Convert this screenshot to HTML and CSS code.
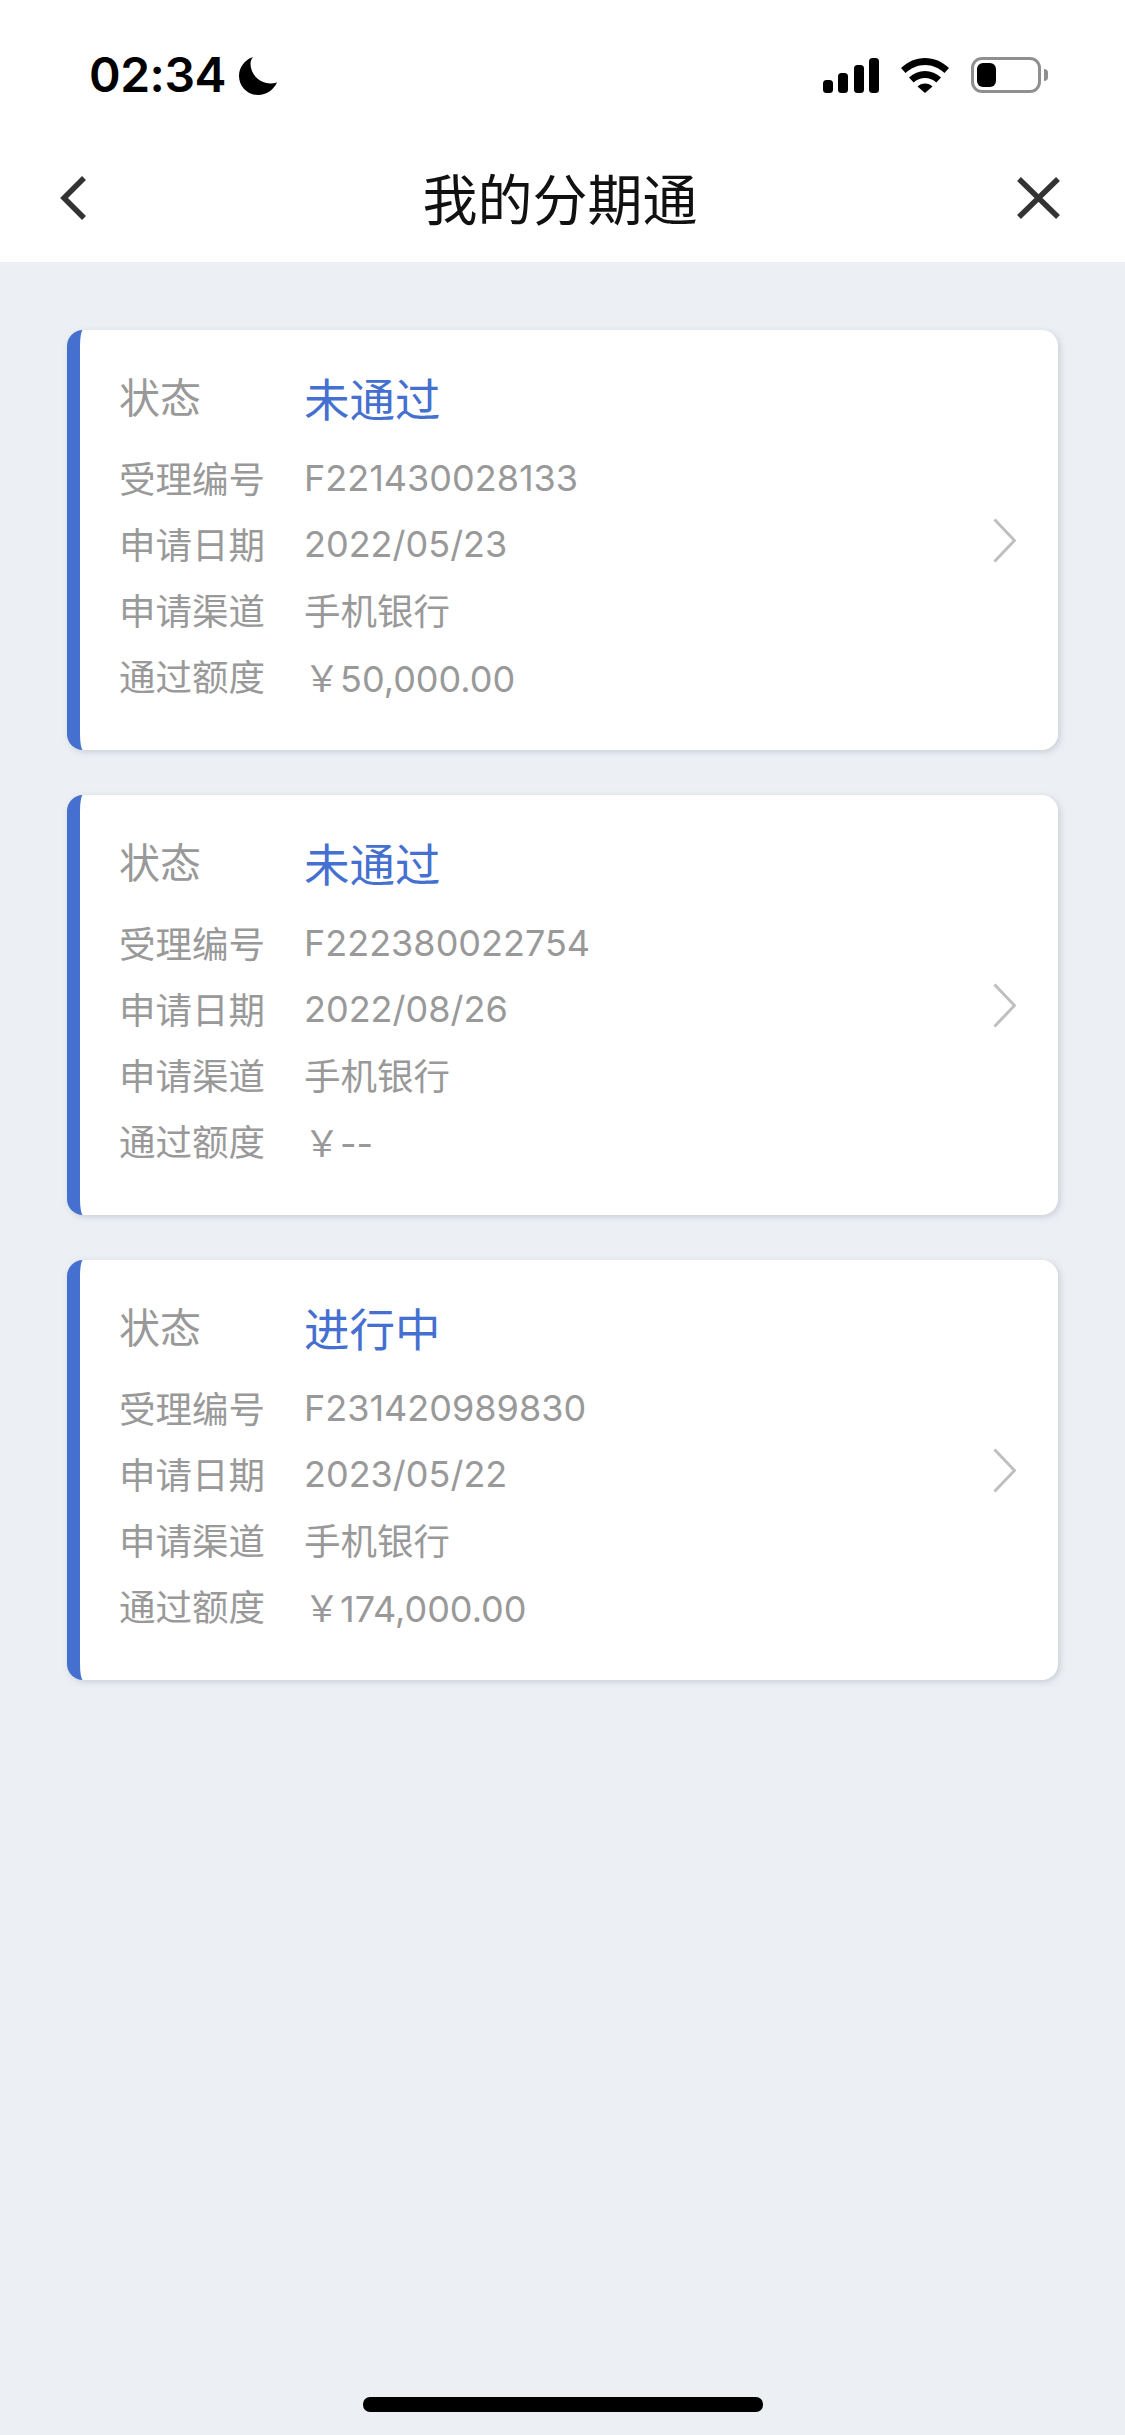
FILE: index.html
```html
<!DOCTYPE html>
<html lang="zh-CN">
<head>
<meta charset="UTF-8">
<meta name="viewport" content="width=device-width, initial-scale=1">
<title>我的分期通</title>
<link rel="stylesheet" href="styles.css">
</head>
<body>
<header class="top">
  <div class="status">
    <div class="clock">
      <span class="time">02:34</span>
      <svg class="moon" viewBox="0 0 38 38"><path d="M14 0C5.500 3 0 10.500 0 19c0 10.500 8.500 19 19 19 8.500 0 15.500-5 19-12.500-2.200.7-4.500 1-6.500 1C20.500 26.500 11.500 17.500 11.500 6.500c0-2.300.9-4.500 2.500-6.500z"/></svg>
    </div>
    <div class="indicators">
      <svg class="signal" viewBox="0 0 56 35"><rect x="0" y="22" width="10" height="13" rx="3.500"/><rect x="15" y="15" width="10" height="20" rx="3.500"/><rect x="31" y="7" width="10" height="28" rx="3.500"/><rect x="46" y="0" width="10" height="35" rx="3.500"/></svg>
      <svg class="wifi" viewBox="0 0 48 35"><path d="M24 0C15 0 7 3.500 0 10l4.500 5C10 10 16.500 7 24 7s14 3 19.500 8l4.500-5C41 3.500 33 0 24 0z"/><path d="M24 13c-6 0-11.500 2.200-16 6.500l4.700 5C15.800 21.500 19.700 20 24 20s8.200 1.500 11.300 4.500l4.700-5C35.500 15.200 30 13 24 13z"/><path d="M24 25.500c-3 0-5.500 1-7.500 3L24 35l7.500-6.500c-2-2-4.500-3-7.500-3z"/></svg>
      <div class="battery">
        <div class="battery-body"><div class="battery-level"></div></div>
        <div class="battery-nub"></div>
      </div>
    </div>
  </div>
  <nav class="nav">
    <svg class="back" viewBox="0 0 26 44"><path d="M24 2L4 22l20 20"/></svg>
    <h1>我的分期通</h1>
    <svg class="close" viewBox="0 0 43 42"><path d="M2 2l39 38M41 2L2 40"/></svg>
  </nav>
</header>

<main class="list">
  <a class="card">
    <div class="info">
      <div class="row state"><span class="label">状态</span><span class="value">未通过</span></div>
      <div class="row"><span class="label">受理编号</span><span class="value">F221430028133</span></div>
      <div class="row"><span class="label">申请日期</span><span class="value">2022/05/23</span></div>
      <div class="row"><span class="label">申请渠道</span><span class="value channel">手机银行</span></div>
      <div class="row"><span class="label">通过额度</span><span class="value">￥50,000.00</span></div>
    </div>
    <svg class="arrow" viewBox="0 0 23 45"><path d="M1.500 1.500l20 21-20 21"/></svg>
  </a>
  <a class="card">
    <div class="info">
      <div class="row state"><span class="label">状态</span><span class="value">未通过</span></div>
      <div class="row"><span class="label">受理编号</span><span class="value">F222380022754</span></div>
      <div class="row"><span class="label">申请日期</span><span class="value">2022/08/26</span></div>
      <div class="row"><span class="label">申请渠道</span><span class="value channel">手机银行</span></div>
      <div class="row"><span class="label">通过额度</span><span class="value">￥--</span></div>
    </div>
    <svg class="arrow" viewBox="0 0 23 45"><path d="M1.500 1.500l20 21-20 21"/></svg>
  </a>
  <a class="card">
    <div class="info">
      <div class="row state"><span class="label">状态</span><span class="value">进行中</span></div>
      <div class="row"><span class="label">受理编号</span><span class="value">F231420989830</span></div>
      <div class="row"><span class="label">申请日期</span><span class="value">2023/05/22</span></div>
      <div class="row"><span class="label">申请渠道</span><span class="value channel">手机银行</span></div>
      <div class="row"><span class="label">通过额度</span><span class="value">￥174,000.00</span></div>
    </div>
    <svg class="arrow" viewBox="0 0 23 45"><path d="M1.500 1.500l20 21-20 21"/></svg>
  </a>
</main>

<div class="home"><div class="home-bar"></div></div>
</body>
</html>
```

FILE: styles.css
```css
html,body{height:100%;}
body{margin:0;display:flex;flex-direction:column;height:2435px;background:#ecf0f4;font-family:Inter,"Noto Sans CJK SC",sans-serif;color:#000;overflow:hidden;}

.top{background:#fff;height:262px;flex:none;}
.status{display:flex;justify-content:space-between;align-items:flex-start;padding:52px 77px 0 89px;height:50px;}
.clock{display:flex;align-items:center;gap:13px;}
.time{font-size:48px;font-weight:600;line-height:46px;letter-spacing:-.5px;}
.moon{width:38px;height:38px;margin-top:2px;}
.indicators{display:flex;align-items:center;gap:22px;margin-top:5px;}
.signal{width:56px;height:35px;display:block;}
.wifi{width:48px;height:35px;display:block;}
.battery{display:flex;align-items:center;gap:3px;}
.battery-body{width:70px;height:36px;box-sizing:border-box;border:3px solid #8f8f8f;border-radius:11px;padding:3px;}
.battery-level{width:19px;height:100%;background:#000;border-radius:6px;}
.battery-nub{width:4px;height:12px;background:#8f8f8f;border-radius:0 4px 4px 0;}

.nav{display:grid;grid-template-columns:1fr auto 1fr;align-items:center;padding:0 65px 0 60px;height:96px;margin-top:48px;}
.nav h1{margin:0 0 4px;font-size:55px;font-weight:400;line-height:54px;color:#111;font-family:"Noto Sans CJK SC",sans-serif;}
.back{width:26px;height:44px;}
.close{width:43px;height:42px;justify-self:end;}
.back path,.close path{fill:none;stroke:#333;stroke-width:5.500;}

.list{flex:1;display:flex;flex-direction:column;gap:45px;padding:68px 67px 0;}
.card{display:flex;align-items:center;height:420px;box-sizing:border-box;background:#fff;border-left:13px solid #4570d0;border-radius:16px;box-shadow:2px 2px 6px rgba(150,155,170,.4);padding:0 42px 0 39px;}
.info{flex:1;padding-bottom:9px;}
.row{display:flex;align-items:center;height:66px;font-size:36px;color:#999;font-family:"Noto Sans CJK SC",sans-serif;font-weight:400;}
.label{width:185px;flex:none;font-size:36.500px;}
.value{font-family:Inter,"Noto Sans CJK SC",sans-serif;font-weight:400;}
.value.channel{font-size:36.500px;}
.state{height:74px;margin:-3px 0 11px;}
.state .label{font-size:41px;margin-bottom:4px;}
.state .value{font-size:45.500px;color:#4570d0;font-family:"Noto Sans CJK SC",sans-serif;}
.arrow{width:23px;height:45px;flex:none;}
.arrow path{fill:none;stroke:#bfbfbf;stroke-width:3;}

.home{flex:none;display:flex;justify-content:center;padding-bottom:23px;}
.home-bar{width:400px;height:15px;background:#000;border-radius:7px;}
```
